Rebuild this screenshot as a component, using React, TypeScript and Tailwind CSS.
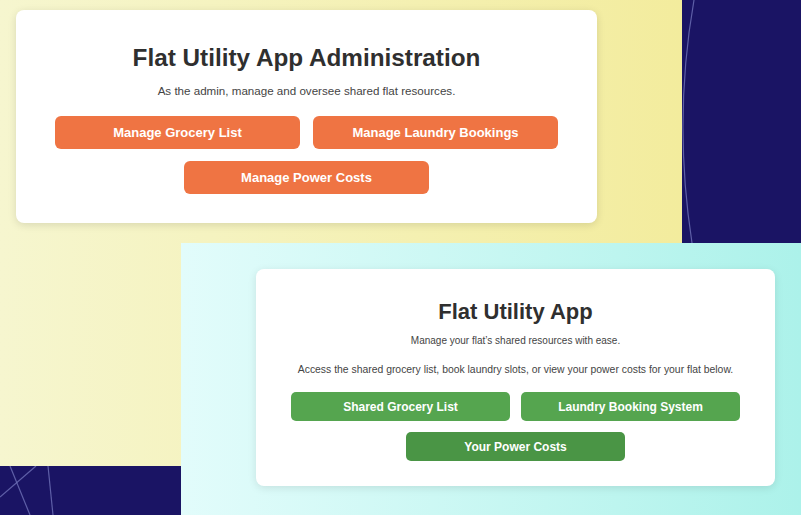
import React from 'react'

const adminButtons = ['Manage Grocery List', 'Manage Laundry Bookings', 'Manage Power Costs']
const userButtons = ['Shared Grocery List', 'Laundry Booking System', 'Your Power Costs']

const Lines = () => (
  <svg className="absolute inset-0 h-full w-full" viewBox="0 0 801 515" fill="none">
    <path d="M694 0 Q673 120 692 243" stroke="#6f72b8" strokeWidth="1.2" opacity="0.8" />
    <path d="M10 466 L30 515" stroke="#6f72b8" strokeWidth="1.2" opacity="0.8" />
    <path d="M36 466 L0 497" stroke="#6f72b8" strokeWidth="1.2" opacity="0.8" />
    <path d="M48 466 L53 515" stroke="#6f72b8" strokeWidth="1.2" opacity="0.8" />
  </svg>
)

export default function App() {
  return (
    <div
      className="relative h-[515px] w-[801px] overflow-hidden bg-[#1a1464]"
      style={{ fontFamily: '"Liberation Sans", Arial, sans-serif' }}
    >
      <Lines />

      {/* admin window */}
      <div className="absolute left-0 top-0 h-[466px] w-[682px] bg-linear-to-r from-[#f6f6cf] to-[#f3ec9d] pl-[16px] pt-[10px]">
        <div className="flex h-[213px] w-[581px] flex-col items-center rounded-lg bg-white pt-[34px] shadow-[0_2px_8px_rgba(0,0,0,0.12)]">
          <h1 className="h-[28px] text-[24.3px] font-bold leading-[28px] text-[#2f2f2f]">
            Flat Utility App Administration
          </h1>
          <p className="mt-[11px] text-[11.6px] leading-[16px] text-[#444]">
            As the admin, manage and oversee shared flat resources.
          </p>
          <div className="mt-[17px] flex w-[503px] flex-wrap justify-center gap-x-[13px] gap-y-[12px]">
            {adminButtons.map((label) => (
              <button
                key={label}
                className="h-[33px] w-[245px] rounded-[6px] bg-[#ef7443] text-[13px] font-bold text-white"
              >
                {label}
              </button>
            ))}
          </div>
        </div>
      </div>

      {/* resident window */}
      <div className="absolute left-[181px] top-[243px] h-[272px] w-[620px] bg-linear-to-r from-[#e2fcfb] to-[#acf2ea] pl-[75px] pt-[26px]">
        <div className="flex h-[217px] w-[519px] flex-col items-center rounded-lg bg-white pt-[30px] shadow-[0_2px_8px_rgba(0,0,0,0.1)]">
          <h2 className="h-[26px] text-[22px] font-bold leading-[26px] text-[#2f2f2f]">Flat Utility App</h2>
          <p className="mt-[9px] text-[10px] leading-[14px] text-[#444]">
            Manage your flat&rsquo;s shared resources with ease.
          </p>
          <p className="mt-[15px] text-[10.4px] leading-[14px] text-[#444]">
            Access the shared grocery list, book laundry slots, or view your power costs for your flat below.
          </p>
          <div className="mt-[15px] flex w-[449px] flex-wrap justify-center gap-x-[11px] gap-y-[11px]">
            {userButtons.map((label, i) => (
              <button
                key={label}
                className={`h-[29px] w-[219px] rounded-[5px] text-[12px] font-bold text-white ${
                  i === 2 ? 'bg-[#4a9545]' : 'bg-[#55a54f]'
                }`}
              >
                {label}
              </button>
            ))}
          </div>
        </div>
      </div>
    </div>
  )
}
